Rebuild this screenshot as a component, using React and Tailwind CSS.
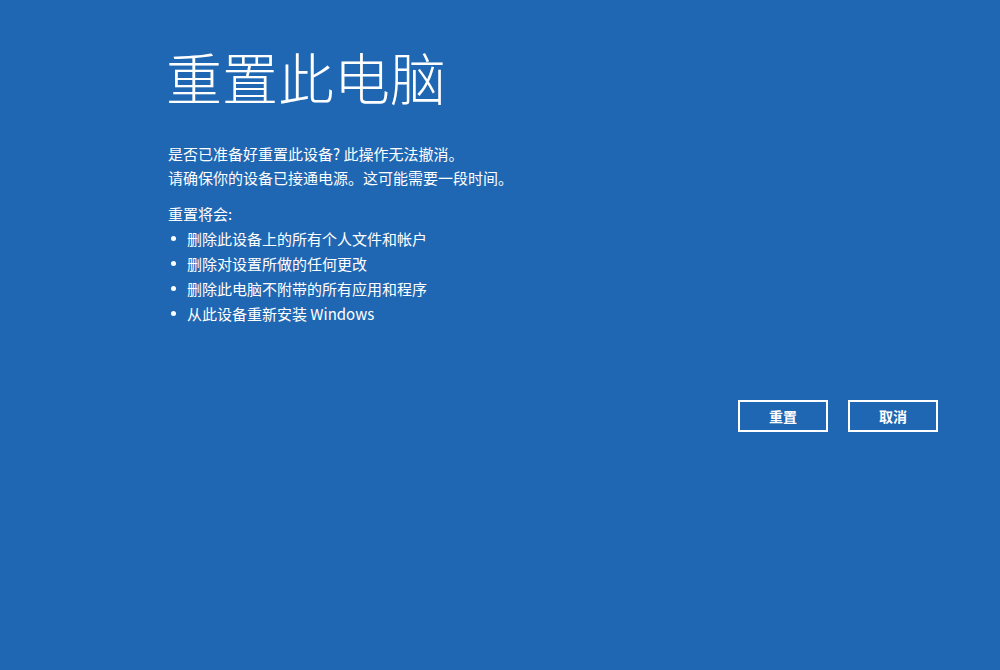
import React from 'react';

const font = "'Noto Sans CJK SC', 'Noto Sans', sans-serif";

const items = [
  '删除此设备上的所有个人文件和帐户',
  '删除对设置所做的任何更改',
  '删除此电脑不附带的所有应用和程序',
  '从此设备重新安装 Windows',
];

export default function App() {
  return (
    <div className="w-[1000px] h-[670px] bg-[#1f67b2] text-white overflow-hidden" style={{ fontFamily: font }}>
      <div className="pl-[166px] pt-[40px]">
        <h1 className="text-[56px] font-light leading-[72px]">重置此电脑</h1>
        <div className="mt-[30px] text-[15px] leading-[24px] pl-[2px]">
          <p>是否已准备好重置此设备? 此操作无法撤消。</p>
          <p>请确保你的设备已接通电源。这可能需要一段时间。</p>
        </div>
        <div className="mt-[11px] text-[15px] leading-[25px] pl-[2px]">
          <p>重置将会:</p>
          <ul>
            {items.map(t => (
              <li key={t} className="flex items-center">
                <span className="w-[19px] pl-[3px] flex">
                  <span className="w-[5px] h-[5px] rounded-full bg-white"></span>
                </span>
                <span>{t}</span>
              </li>
            ))}
          </ul>
        </div>
      </div>
      <div className="flex justify-end gap-[20px] pr-[62px] mt-[74px]">
        <button className="w-[90px] h-[32px] border-2 border-white text-[14px] font-bold">重置</button>
        <button className="w-[90px] h-[32px] border-2 border-white text-[14px] font-bold">取消</button>
      </div>
    </div>
  );
}
